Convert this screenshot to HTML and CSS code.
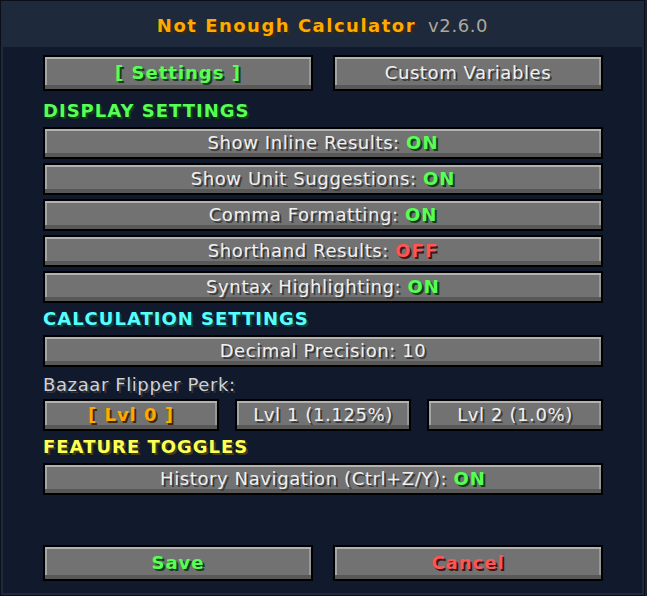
FILE: index.html
```html
<!DOCTYPE html>
<html lang="en">
<head>
<meta charset="utf-8">
<title>Not Enough Calculator</title>
<link rel="stylesheet" href="styles.css">
</head>
<body>
<div class="panel">
  <header class="head">
    <span class="title">Not Enough Calculator</span>
    <span class="ver">v2.6.0</span>
  </header>
  <main class="content">
    <div class="pair tabs">
      <div class="btn tall"><span class="green b">[ Settings ]</span></div>
      <div class="btn tall">Custom Variables</div>
    </div>

    <h2 class="sec green">DISPLAY SETTINGS</h2>
    <div class="list">
      <div class="btn">Show Inline Results:&nbsp;<span class="green b">ON</span></div>
      <div class="btn">Show Unit Suggestions:&nbsp;<span class="green b">ON</span></div>
      <div class="btn">Comma Formatting:&nbsp;<span class="green b">ON</span></div>
      <div class="btn">Shorthand Results:&nbsp;<span class="red b">OFF</span></div>
      <div class="btn">Syntax Highlighting:&nbsp;<span class="green b">ON</span></div>
    </div>

    <h2 class="sec aqua">CALCULATION SETTINGS</h2>
    <div class="btn">Decimal Precision: 10</div>
    <div class="label">Bazaar Flipper Perk:</div>
    <div class="triple">
      <div class="btn"><span class="gold b">[ Lvl 0 ]</span></div>
      <div class="btn">Lvl 1 (1.125%)</div>
      <div class="btn">Lvl 2 (1.0%)</div>
    </div>

    <h2 class="sec yellow">FEATURE TOGGLES</h2>
    <div class="btn">History Navigation (Ctrl+Z/Y):&nbsp;<span class="green b">ON</span></div>

    <div class="pair footer">
      <div class="btn tall"><span class="green b">Save</span></div>
      <div class="btn tall"><span class="red b">Cancel</span></div>
    </div>
  </main>
</div>
</body>
</html>
```

FILE: styles.css
```css
html, body {
  margin: 0;
  padding: 0;
}

body {
  background: #1c2030;
  width: 647px;
  height: 596px;
  overflow: hidden;
  font-family: "DejaVu Sans", "Liberation Sans", sans-serif;
  font-size: 18px;
  letter-spacing: 0.6px;
  color: #e6e6e6;
}

.panel {
  width: 645px;
  height: 596px;
  box-sizing: border-box;
  border: 1px solid #0b0f18;
  background: #1e293c;
  padding: 0 2px 2px;
  display: flex;
  flex-direction: column;
}

.head {
  height: 46px;
  box-sizing: border-box;
  padding-top: 2px;
  display: flex;
  align-items: center;
  justify-content: center;
  line-height: 21px;
}

.title {
  font-weight: bold;
  color: #ffaa00;
  letter-spacing: 1.5px;
  text-shadow: 2px 2px 0 #3f2a00;
}

.ver {
  margin-left: 12px;
  color: #a8a8a8;
  text-shadow: 2px 2px 0 #2a2a2a;
}

.content {
  flex: 1;
  background: #111a2d;
  padding: 8px 39px 0 40px;
  display: flex;
  flex-direction: column;
}

.btn {
  height: 32px;
  box-sizing: border-box;
  border: 2px solid #000;
  background: #727272;
  box-shadow:
    inset 0 -4px 0 #585858,
    inset 0 2px 0 #b2b2b2,
    inset 2px 0 0 #a4a4a4,
    inset -2px 0 0 #979797;
  display: flex;
  align-items: center;
  justify-content: center;
  padding-bottom: 2px;
  line-height: 21px;
  white-space: nowrap;
  color: #f0f0f0;
  text-shadow: 2px 2px 0 #3a3a3a;
}

.btn.tall {
  height: 36px;
}

.pair {
  display: grid;
  grid-template-columns: 1fr 1fr;
  gap: 20px;
}

.tabs {
  margin-bottom: 4px;
}

.footer {
  margin-top: auto;
  margin-bottom: 12px;
}

.list {
  display: flex;
  flex-direction: column;
  gap: 4px;
}

.triple {
  display: grid;
  grid-template-columns: repeat(3, 1fr);
  gap: 16px;
}

.sec {
  margin: 5px 0 6px;
  height: 21px;
  line-height: 21px;
  font-size: 18px;
  font-weight: bold;
  letter-spacing: 1px;
}

.label {
  margin: 7px 0 4px;
  height: 21px;
  line-height: 21px;
  color: #cfd2d8;
  text-shadow: 2px 2px 0 #33363c;
}

.b {
  font-weight: bold;
  letter-spacing: 1px;
}

.green {
  color: #55ff55;
  text-shadow: 2px 2px 0 #153f15;
}

.red {
  color: #ff5555;
  text-shadow: 2px 2px 0 #3f1515;
}

.gold {
  color: #ffaa00;
  text-shadow: 2px 2px 0 #3f2a00;
}

.aqua {
  color: #55ffff;
  text-shadow: 2px 2px 0 #153f3f;
}

.yellow {
  color: #ffff55;
  text-shadow: 2px 2px 0 #3f3f15;
}
```
